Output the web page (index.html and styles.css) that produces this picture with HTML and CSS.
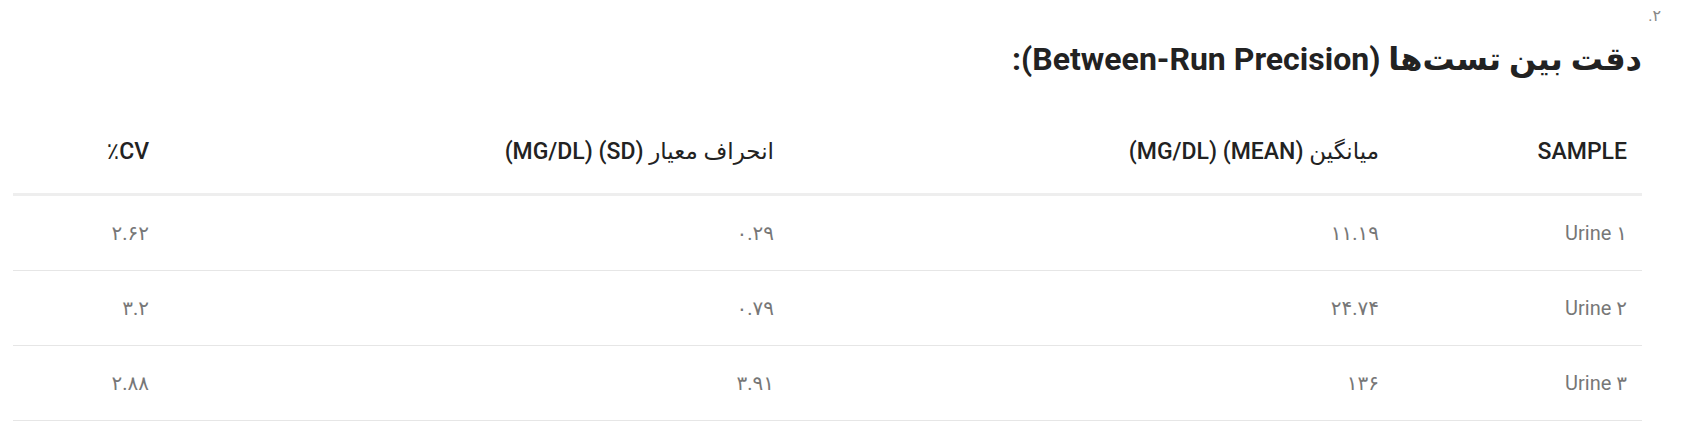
FILE: index.html
```html
<!DOCTYPE html>
<html lang="fa" dir="rtl">
<head>
<meta charset="utf-8">
<title>دقت بین تست‌ها</title>
<link rel="stylesheet" href="styles.css">
</head>
<body>
<div class="page">
  <div class="num">۲.</div>
  <div class="content">
    <h2 class="title">دقت بین تست‌ها (Between-Run Precision):</h2>
    <table class="data">
      <thead>
        <tr>
          <th class="c1">Sample</th>
          <th class="c2">میانگین (Mean) (mg/dL)</th>
          <th class="c3">انحراف معیار (SD) (mg/dL)</th>
          <th class="c4">CV٪</th>
        </tr>
      </thead>
      <tbody>
        <tr><td>Urine ۱</td><td>۱۱.۱۹</td><td>۰.۲۹</td><td>۲.۶۲</td></tr>
        <tr><td>Urine ۲</td><td>۲۴.۷۴</td><td>۰.۷۹</td><td>۳.۲</td></tr>
        <tr><td>Urine ۳</td><td>۱۳۶</td><td>۳.۹۱</td><td>۲.۸۸</td></tr>
      </tbody>
    </table>
  </div>
</div>
</body>
</html>
```
FILE: styles.css
```css
html, body {
  margin: 0;
  padding: 0;
  background: #ffffff;
}
body {
  font-family: Roboto, "DejaVu Sans", sans-serif;
  color: #222222;
}
.page {
  padding: 5px 34px 0 13px;
}
.num {
  font-size: 16px;
  line-height: 22px;
  color: #888888;
}
.content {
  margin-right: 19px;
}
.title {
  margin: 12px 0 0 0;
  font-size: 32px;
  line-height: 40px;
  font-weight: 700;
  color: #222222;
  text-align: right;
}
.data {
  margin-top: 36px;
  width: 100%;
  border-collapse: collapse;
  table-layout: fixed;
}
.data th,
.data td {
  box-sizing: border-box;
}
.data th {
  padding: 22px 15px 26px 15px;
  font-size: 23px;
  line-height: 30px;
  font-weight: 500;
  text-transform: uppercase;
  text-align: right;
  color: #222222;
  border-bottom: 3px solid #eeeeee;
}
.data td {
  padding: 22px 15px 22px 15px;
  font-size: 20px;
  line-height: 30px;
  font-weight: 400;
  text-align: right;
  color: #777777;
  border-bottom: 1px solid #e6e6e6;
}
.c1 { width: 248px; }
.c2 { width: 605px; }
.c3 { width: 625px; }
.c4 { width: 151px; }
```
